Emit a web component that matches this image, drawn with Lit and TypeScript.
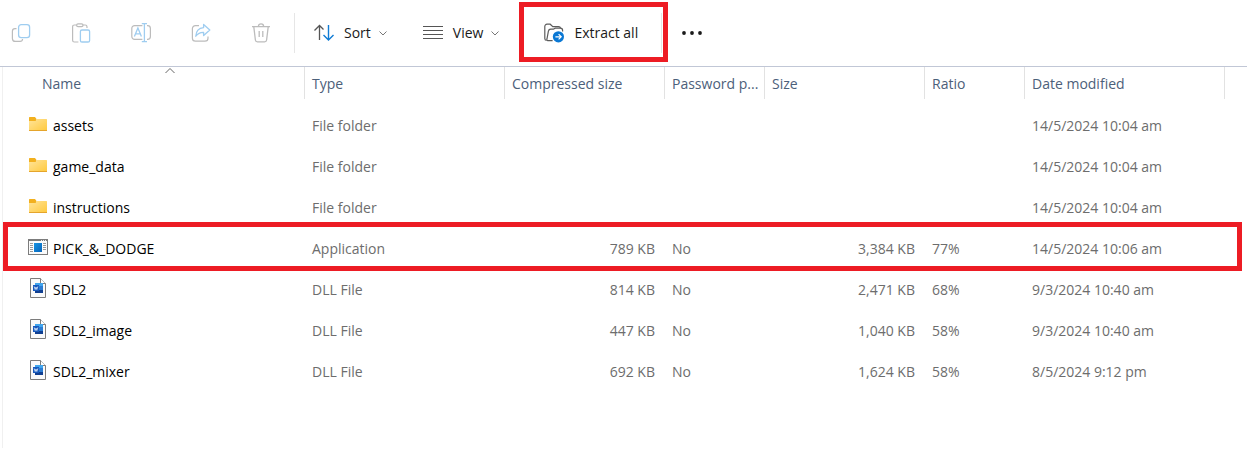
import { LitElement, html, css, svg, nothing } from "lit";
import { customElement } from "lit/decorators.js";
import { classMap } from "lit/directives/class-map.js";

type Kind = "folder" | "app" | "doc";

interface Entry {
  name: string;
  kind: Kind;
  type: string;
  packed?: string;
  secured?: string;
  size?: string;
  ratio?: string;
  date: string;
  marked?: boolean;
}

const entries: Entry[] = [
  { name: "assets", kind: "folder", type: "File folder", date: "14/5/2024 10:04 am" },
  { name: "game_data", kind: "folder", type: "File folder", date: "14/5/2024 10:04 am" },
  { name: "instructions", kind: "folder", type: "File folder", date: "14/5/2024 10:04 am" },
  { name: "PICK_&_DODGE", kind: "app", type: "Application", packed: "789 KB", secured: "No", size: "3,384 KB", ratio: "77%", date: "14/5/2024 10:06 am", marked: true },
  { name: "SDL2", kind: "doc", type: "DLL File", packed: "814 KB", secured: "No", size: "2,471 KB", ratio: "68%", date: "9/3/2024 10:40 am" },
  { name: "SDL2_image", kind: "doc", type: "DLL File", packed: "447 KB", secured: "No", size: "1,040 KB", ratio: "58%", date: "9/3/2024 10:40 am" },
  { name: "SDL2_mixer", kind: "doc", type: "DLL File", packed: "692 KB", secured: "No", size: "1,624 KB", ratio: "58%", date: "8/5/2024 9:12 pm" },
];

const icon = (body: unknown) => html`
  <svg class="icon" width="20" height="20" viewBox="0 0 20 20" fill="none" aria-hidden="true">${body}</svg>
`;

const GREY = "#bcbcbc";
const PALE = "#9fcdf0";

const copyIcon = icon(svg`
  <path d="M5.5 5.6H4A2.6 2.6 0 0 0 1.4 8.2V15.4A3 3 0 0 0 4.4 18.4H9A2.6 2.6 0 0 0 11.6 16" stroke="${GREY}" stroke-width="1.2"/>
  <rect x="7.6" y="1.6" width="11" height="13" rx="2.6" stroke="${PALE}" stroke-width="1.3"/>`);

const pasteIcon = icon(svg`
  <path d="M7.4 19H3.4A1.8 1.8 0 0 1 1.6 17.2V3.8A1.8 1.8 0 0 1 3.4 2H5.4M12 2H14.2A1.8 1.8 0 0 1 16 3.8V5" stroke="${GREY}" stroke-width="1.2"/>
  <rect x="5.6" y="0.8" width="6.4" height="2.8" rx="1.4" stroke="${GREY}" stroke-width="1.2"/>
  <rect x="9.4" y="7" width="9.2" height="12" rx="1.6" stroke="${PALE}" stroke-width="1.3"/>`);

const renameIcon = icon(svg`
  <path d="M11.4 2.6H3.6A2.8 2.8 0 0 0 .8 5.4V13.6A2.8 2.8 0 0 0 3.6 16.4H11.4M16 2.6H16.6A2.8 2.8 0 0 1 19.4 5.4V13.6A2.8 2.8 0 0 1 16.6 16.4H16" stroke="${GREY}" stroke-width="1.2"/>
  <path d="M3.4 13.6L6.9 5L10.4 13.6M4.6 10.8H9.2M13.4 .8V18.4M10.8 .6H16M10.8 18.6H16" stroke="${PALE}" stroke-width="1.3"/>`);

const shareIcon = icon(svg`
  <path d="M8 2.6H4.4A3 3 0 0 0 1.4 5.6V15.2A3 3 0 0 0 4.4 18.2H14A3 3 0 0 0 17 15.2V13.4" stroke="${GREY}" stroke-width="1.2"/>
  <path d="M12.6 1.4L18.8 7L12.6 12.6V9.4C9 9.2 6.8 10.6 4.8 13.2C5 8.6 7.8 5 12.6 4.6Z" stroke="${PALE}" stroke-width="1.3" stroke-linejoin="round"/>`);

const trashIcon = icon(svg`
  <path d="M1 3.6H19M2.8 3.8L4.4 17A2 2 0 0 0 6.4 18.8H13.6A2 2 0 0 0 15.6 17L17.2 3.8M7.4 3.4A2.6 2.6 0 0 1 12.6 3.4M8.2 8V14M11.8 8V14" stroke="${GREY}" stroke-width="1.3"/>`);

const sortIcon = icon(svg`
  <path d="M5.5 17V2.5M.5 7.5L5.5 2.5L9.5 6.5" stroke="#555" stroke-width="1.3"/>
  <path d="M14.5 2V17M9.5 12L14.5 17L19.5 12" stroke="#0f7bd4" stroke-width="1.4"/>`);

const viewIcon = icon(svg`
  <path d="M0 3.5H20M0 7.5H20M0 11.5H20M0 15.5H20" stroke="#555"/>`);

const extractIcon = icon(svg`
  <path d="M2.5 17.5A1.9 1.9 0 0 1 .8 15.6V3.4A2.2 2.2 0 0 1 3 1.2H6.2L8.8 3.6H14.4A2.2 2.2 0 0 1 16.6 5.4" stroke="#5c5c5c" stroke-width="1.2"/>
  <path d="M8.6 17.6H3.8C2.8 17.6 2.6 16.8 3 15.8L4.4 8.2A2.4 2.4 0 0 1 6.8 6.2H9.4L11.2 5.2H16.4A2.2 2.2 0 0 1 18.6 7.4V8.4" stroke="#5c5c5c" stroke-width="1.2"/>
  <circle cx="14.4" cy="13.8" r="5.6" fill="#0a78d4"/>
  <path d="M11.4 13.8H17M14.6 11.2L17.2 13.8L14.6 16.4" stroke="#fff" stroke-width="1.2"/>`);

const moreIcon = icon(svg`
  <circle cx="2" cy="10" r="1.9" fill="#1a1a1a"/><circle cx="10" cy="10" r="1.9" fill="#1a1a1a"/><circle cx="18" cy="10" r="1.9" fill="#1a1a1a"/>`);

const chevron = html`
  <svg width="8" height="8" viewBox="0 0 8 8" fill="none" aria-hidden="true">
    <path d="M.5 2.5L4 6L7.500 2.500" stroke="#777"/>
  </svg>`;

const fileIcons: Record<Kind, unknown> = {
  folder: icon(svg`
    <defs><linearGradient id="f" x1="0" y1="0" x2="1" y2="1"><stop offset="0" stop-color="#ffe49a"/><stop offset="1" stop-color="#ffc93c"/></linearGradient></defs>
    <path d="M1 3.600A.600 .600 0 0 1 1.600 3H7L8.500 5V8H1Z" fill="#f2b01e"/>
    <path d="M1 7H7.500L9 5H18.400A.600 .600 0 0 1 19 5.600V16.400A.600 .600 0 0 1 18.400 17H1.600A.600 .600 0 0 1 1 16.400Z" fill="url(#f)"/>
    <path d="M1 16.500H19" stroke="#e5a52c"/>`),
  app: icon(svg`
    <defs><linearGradient id="a" x1="0" y1="0" x2="1" y2="1"><stop offset="0" stop-color="#1593e2"/><stop offset="1" stop-color="#0864ba"/></linearGradient></defs>
    <rect x=".5" y="2.5" width="19" height="15" fill="#fbfbfb" stroke="#7c7c7c"/>
    <path d="M0 3H20" stroke="#7c7c7c" stroke-width="2"/>
    <path d="M13 3.5H14M15 3.5H16M17 3.5H18" stroke="#eee"/>
    <path d="M2 6.5H5M2 8.5H5M2 10.5H5M2 12.5H5M2 14.500H5M15 6.5H18M15 8.5H18M15 10.5H18M15 12.5H18" stroke="#999"/>
    <rect x="6" y="6" width="8" height="9" fill="url(#a)"/>`),
  doc: icon(svg`
    <path d="M2.5 .5H12.5L17.5 5.5V19.5H2.5Z" fill="#fafafa" stroke="#7c7c7c"/>
    <path d="M12.5 .5V5.5H17.5" fill="#fff" stroke="#7c7c7c"/>
    <rect x="7" y="5" width="8" height="4" fill="#41a5ee"/>
    <rect x="7" y="8" width="8" height="4" fill="#2b7cd3"/>
    <rect x="7" y="12" width="8" height="3" fill="#103f91"/>
    <rect x="5" y="7" width="6" height="6" fill="#185abd"/>
    <path d="M6.2 8.5L7.2 11.5L8 9L8.8 11.5L9.8 8.5" stroke="#dce9fa" stroke-width=".8"/>`),
};

const disabledActions = [
  { label: "Copy", glyph: copyIcon },
  { label: "Paste", glyph: pasteIcon },
  { label: "Rename", glyph: renameIcon },
  { label: "Share", glyph: shareIcon },
  { label: "Delete", glyph: trashIcon },
];

@customElement("command-bar")
class CommandBar extends LitElement {
  static styles = css`
    :host {
      display: flex;
      align-items: center;
      height: 66px;
      padding-left: 1px;
      border-bottom: 1px solid #c1c7d6;
    }
    .group {
      display: flex;
      gap: 20px;
    }
    .action {
      display: flex;
      align-items: center;
      gap: 10px;
      height: 40px;
      padding: 0 10px;
      border: 0;
      background: none;
      color: #1a1a1a;
      font: inherit;
      white-space: nowrap;
    }
    .rule {
      width: 1px;
      height: 40px;
      background: #e6e6e6;
    }
    .lead {
      margin: 0 9px 0 13px;
    }
    .menus {
      gap: 16px;
    }
    .menu {
      gap: 8px;
    }
    .menu .icon {
      margin-right: 2px;
    }
    .marked {
      display: flex;
      align-items: center;
      justify-content: space-between;
      box-sizing: border-box;
      height: 60px;
      width: 149px;
      margin: 0 4px 2px 10px;
      padding: 2px 1px 0 10px;
      border: 5px solid #ed1c24;
    }
  `;

  render() {
    return html`
      <div class="group">
        ${disabledActions.map(
          (a) => html`<button class="action" disabled aria-label=${a.label}>${a.glyph}</button>`
        )}
      </div>
      <span class="rule lead"></span>
      <div class="group menus">
        <button class="action menu">${sortIcon}<span>Sort</span>${chevron}</button>
        <button class="action menu">${viewIcon}<span>View</span>${chevron}</button>
      </div>
      <div class="marked">
        <button class="action">${extractIcon}<span>Extract all</span></button>
        <span class="rule"></span>
      </div>
      <button class="action" aria-label="See more">${moreIcon}</button>
    `;
  }
}

@customElement("file-list")
class FileList extends LitElement {
  static styles = css`
    :host {
      display: block;
      min-height: 381px;
      margin-left: 2px;
      border-left: 1px solid #f0f0f0;
    }
    .files {
      width: 100%;
      table-layout: fixed;
      border-collapse: separate;
      border-spacing: 0;
      color: #6d6d6d;
    }
    .w302 { width: 302px; }
    .w200 { width: 200px; }
    .w160 { width: 160px; }
    .w100 { width: 100px; }
    th {
      position: relative;
      box-sizing: border-box;
      height: 32px;
      padding: 2px 0 0 7px;
      border-right: 1px solid #e2e2e2;
      color: #4c607a;
      font-weight: 400;
      text-align: left;
      white-space: nowrap;
    }
    th.name {
      padding-left: 39px;
    }
    th.rest {
      border: 0;
    }
    .arrow {
      position: absolute;
      top: 0;
      left: 50%;
      margin-left: 10px;
    }
    .space td {
      height: 6px;
    }
    td {
      height: 41px;
      padding: 0 10px 0 7px;
      white-space: nowrap;
    }
    .label {
      display: flex;
      align-items: center;
      gap: 5px;
      padding-left: 18px;
      color: #000;
    }
    .label .icon {
      margin-bottom: 3px;
    }
    .num {
      text-align: right;
    }
    .marked {
      position: relative;
    }
    .marked::after {
      content: "";
      position: absolute;
      inset: -6px 5px -2px 0;
      border: 5px solid #ed1c24;
      pointer-events: none;
    }
  `;

  render() {
    return html`
      <table class="files">
        <colgroup>
          <col class="w302" /><col class="w200" /><col class="w160" /><col class="w100" />
          <col class="w160" /><col class="w100" /><col class="w200" /><col />
        </colgroup>
        <thead>
          <tr>
            <th class="name">
              Name
              <svg class="arrow" width="12" height="8" viewBox="0 0 12 8" fill="none" aria-hidden="true">
                <path d="M1.5 6L6 1.5L10.5 6" stroke="#666" />
              </svg>
            </th>
            <th>Type</th>
            <th>Compressed size</th>
            <th>Password p...</th>
            <th>Size</th>
            <th>Ratio</th>
            <th>Date modified</th>
            <th class="rest"></th>
          </tr>
        </thead>
        <tbody>
          <tr class="space"><td colspan="8"></td></tr>
          ${entries.map(
            (e) => html`
              <tr class=${classMap({ marked: !!e.marked })}>
                <td><span class="label">${fileIcons[e.kind]}<span>${e.name}</span></span></td>
                <td>${e.type}</td>
                <td class="num">${e.packed ?? nothing}</td>
                <td>${e.secured ?? nothing}</td>
                <td class="num">${e.size ?? nothing}</td>
                <td>${e.ratio ?? nothing}</td>
                <td>${e.date}</td>
                <td></td>
              </tr>
            `
          )}
        </tbody>
      </table>
    `;
  }
}

@customElement("app-root")
class AppRoot extends LitElement {
  static styles = css`
    :host {
      display: block;
      background: #fff;
      font: 14px/20px "Open Sans", "Noto Sans", sans-serif;
    }
  `;

  render() {
    return html`<command-bar></command-bar><file-list></file-list>`;
  }
}
